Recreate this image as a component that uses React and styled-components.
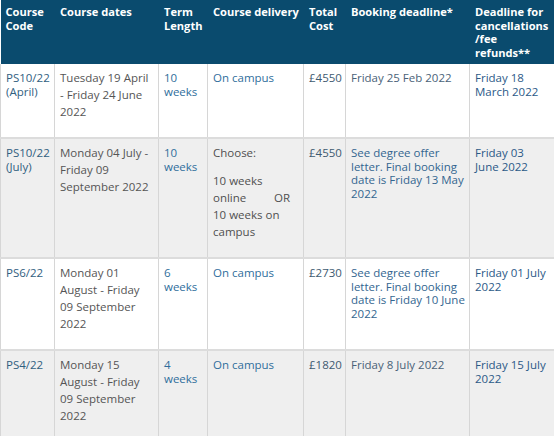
import React from "react";
import styled, { createGlobalStyle } from "styled-components";

const Global = createGlobalStyle`
  html, body { margin: 0; padding: 0; background: #ffffff; overflow: hidden; }
  body { font-family: "Open Sans", "DejaVu Sans", sans-serif; }
`;

const Frame = styled.div`
  width: 554px;
  height: 436px;
  overflow: hidden;
  background: #ffffff;
`;

const Table = styled.table`
  width: 560px;
  border-collapse: collapse;
  table-layout: fixed;
  font-size: 11.5px;
  margin-left: 0;
`;

const HeadCell = styled.th`
  background: #0a4b6e;
  color: #ffffff;
  font-size: 11.1px;
  font-weight: 700;
  text-align: left;
  vertical-align: top;
  line-height: 13.6px;
  padding: 5px ${(p) => p.$pr ?? 2}px 4px 5px;
  height: 55px;
  border-right: 1px solid #0a4b6e;
  white-space: ${(p) => (p.$nowrap ? "nowrap" : "normal")};
`;

const Row = styled.tr`
  background: ${(p) => (p.$shade ? "#efefef" : "#ffffff")};
  border-top: ${(p) => (p.$first ? "0" : "2px solid #dcdcdc")};
`;

const Cell = styled.td`
  vertical-align: top;
  text-align: left;
  color: ${(p) => p.$color || "#555555"};
  line-height: ${(p) => (p.$loose ? "17px" : "13.6px")};
  padding: ${(p) => (p.$loose ? 5 : 7)}px ${(p) => p.$pr ?? 2}px 17px 5px;
  border-left: 1px solid #d6d6d6;
  border-right: 1px solid #d6d6d6;
`;

const Para = styled.div`
  margin-bottom: ${(p) => p.$gap || 0}px;
`;

const Choice = styled.div`
  display: flex;
  justify-content: space-between;
  width: 77px;
`;

const C = {
  code: "#31607f",
  dates: "#555555",
  term: "#2f6e9c",
  delivery: "#2f6e9c",
  cost: "#3e5a70",
  bookingPlain: "#4a6278",
  bookingNote: "#336690",
  cancel: "#2b5987",
  plain: "#505050",
};

const rows = [
  {
    code: ["PS10/22", "(April)"],
    dates: "Tuesday 19 April - Friday 24 June 2022",
    term: "10 weeks",
    delivery: "On campus",
    cost: "£4550",
    booking: { text: "Friday 25 Feb 2022", color: C.bookingPlain },
    cancel: "Friday 18 March 2022",
  },
  {
    code: ["PS10/22", "(July)"],
    dates: "Monday 04 July - Friday 09 September 2022",
    term: "10 weeks",
    delivery: null,
    cost: "£4550",
    booking: { text: "See degree offer letter. Final booking date is Friday 13 May 2022", color: C.bookingNote },
    cancel: "Friday 03 June 2022",
  },
  {
    code: ["PS6/22"],
    dates: "Monday 01 August - Friday 09 September 2022",
    term: "6 weeks",
    delivery: "On campus",
    cost: "£2730",
    booking: { text: "See degree offer letter. Final booking date is Friday 10 June 2022", color: C.bookingNote },
    cancel: "Friday 01 July 2022",
  },
  {
    code: ["PS4/22"],
    dates: "Monday 15 August - Friday 09 September 2022",
    term: "4 weeks",
    delivery: "On campus",
    cost: "£1820",
    booking: { text: "Friday 8 July 2022", color: C.bookingPlain },
    cancel: "Friday 15 July 2022",
  },
];

const headers = [
  { t: "Course Code" },
  { t: "Course dates" },
  { t: "Term Length" },
  { t: "Course delivery", nowrap: true },
  { t: "Total Cost" },
  { t: "Booking deadline*" },
];

export default function App() {
  return (
    <Frame>
      <Global />
      <Table>
        <colgroup>
          <col style={{ width: 54 }} />
          <col style={{ width: 104 }} />
          <col style={{ width: 49 }} />
          <col style={{ width: 96 }} />
          <col style={{ width: 42 }} />
          <col style={{ width: 124 }} />
          <col style={{ width: 91 }} />
        </colgroup>
        <thead>
          <tr>
            {headers.map((h) => (
              <HeadCell key={h.t} $nowrap={h.nowrap}>
                {h.t}
              </HeadCell>
            ))}
            <HeadCell $pr={8}>
              Deadline for cancellations
              <br />
              /fee
              <br />
              refunds**
            </HeadCell>
          </tr>
        </thead>
        <tbody>
          {rows.map((r, i) => (
            <Row key={i} $shade={i % 2 === 1} $first={i === 0}>
              <Cell $color={C.code}>
                {r.code.map((c) => (
                  <div key={c}>{c}</div>
                ))}
              </Cell>
              <Cell $loose $color={C.dates} $pr={4}>
                {r.dates}
              </Cell>
              <Cell $color={C.term}>{r.term}</Cell>
              {r.delivery ? (
                <Cell $color={C.delivery}>{r.delivery}</Cell>
              ) : (
                <Cell $loose $color={C.plain}>
                  <Para $gap={11}>Choose:</Para>
                  <div>10 weeks</div>
                  <Choice>
                    <span>online</span>
                    <span>OR</span>
                  </Choice>
                  <div>10 weeks on campus</div>
                </Cell>
              )}
              <Cell $color={C.cost}>{r.cost}</Cell>
              <Cell $color={r.booking.color}>{r.booking.text}</Cell>
              <Cell $color={C.cancel} $pr={14}>
                {r.cancel}
              </Cell>
            </Row>
          ))}
        </tbody>
      </Table>
    </Frame>
  );
}
